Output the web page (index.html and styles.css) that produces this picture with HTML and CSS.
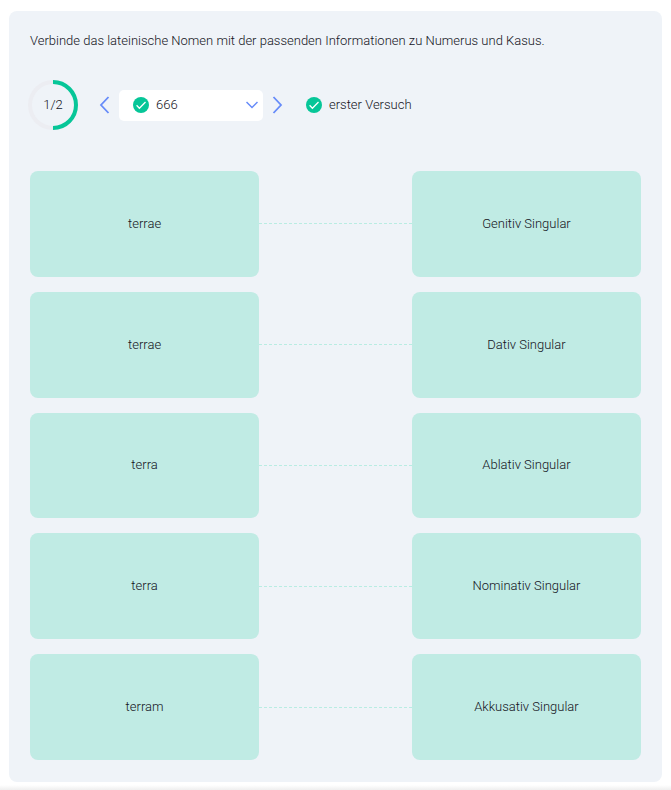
FILE: index.html
```html
<!DOCTYPE html>
<html lang="de">
<head>
<meta charset="utf-8">
<meta name="viewport" content="width=device-width, initial-scale=1">
<title>Nomen verbinden</title>
<link rel="stylesheet" href="styles.css">
</head>
<body>
<main class="panel">
  <p class="task">Verbinde das lateinische Nomen mit der passenden Informationen zu Numerus und Kasus.</p>

  <div class="toolbar">
    <div class="progress">
      <svg class="ring" viewBox="0 0 50 50" aria-hidden="true">
        <circle class="ring-track" cx="25" cy="25" r="23"/>
        <path class="ring-value" d="M25 2a23 23 0 0 1 0 46"/>
      </svg>
      <span class="progress-text">1/2</span>
    </div>

    <div class="pager">
      <button class="step" type="button" aria-label="Zurück">
        <svg class="chevron" viewBox="0 0 11 18" aria-hidden="true"><path d="M9.500 1L2 9L9.500 17"/></svg>
      </button>
      <div class="picker">
        <svg class="check" viewBox="0 0 16 16" aria-hidden="true"><circle cx="8" cy="8" r="8"/><path d="M3.600 8.300L6.400 11.200L12.500 5"/></svg>
        <select class="picker-select" aria-label="Teilnehmer">
          <option>666</option>
        </select>
        <svg class="caret" viewBox="0 0 12 8" aria-hidden="true"><path d="M0.500 1L6 6.500L11.500 1"/></svg>
      </div>
      <button class="step" type="button" aria-label="Weiter">
        <svg class="chevron" viewBox="0 0 11 18" aria-hidden="true"><path d="M1.500 1L9 9L1.500 17"/></svg>
      </button>
    </div>

    <div class="attempt">
      <svg class="check" viewBox="0 0 16 16" aria-hidden="true"><circle cx="8" cy="8" r="8"/><path d="M3.600 8.300L6.400 11.200L12.500 5"/></svg>
      <span>erster Versuch</span>
    </div>
  </div>

  <ul class="pairs">
    <li class="pair"><div class="card">terrae</div><div class="link"></div><div class="card">Genitiv Singular</div></li>
    <li class="pair"><div class="card">terrae</div><div class="link"></div><div class="card">Dativ Singular</div></li>
    <li class="pair"><div class="card">terra</div><div class="link"></div><div class="card">Ablativ Singular</div></li>
    <li class="pair"><div class="card">terra</div><div class="link"></div><div class="card">Nominativ Singular</div></li>
    <li class="pair"><div class="card">terram</div><div class="link"></div><div class="card">Akkusativ Singular</div></li>
  </ul>
</main>
<div class="bottom-shade"></div>
</body>
</html>
```
FILE: styles.css
```css
* {
  box-sizing: border-box;
}

body {
  margin: 0;
  background: #fff;
  color: #14141c;
  font: 350 13px/20px Roboto, "Liberation Sans", sans-serif;
}

.panel {
  margin: 11px 9px 0;
  padding: 20px 21px 22px;
  border-radius: 8px;
  background: #eff3f8;
}

.task {
  margin: 0 0 29px;
}

.toolbar {
  display: flex;
  align-items: center;
  margin: 0 0 41px -2px;
}

.progress {
  display: grid;
  place-items: center;
  width: 50px;
  height: 50px;
}

.ring,
.progress-text {
  grid-area: 1 / 1;
}

.ring {
  width: 50px;
  height: 50px;
  fill: none;
  stroke-width: 4;
}

.ring-track {
  stroke: #ecedf2;
}

.ring-value {
  stroke: #06c698;
}

.pager {
  display: flex;
  align-items: center;
  gap: 9px;
  margin-left: 21px;
}

.step {
  display: flex;
  padding: 0;
  border: 0;
  background: none;
  cursor: pointer;
}

.chevron,
.caret {
  fill: none;
  stroke: #668bf9;
}

.chevron {
  width: 11px;
  height: 18px;
  stroke-width: 1.8;
}

.caret {
  width: 12px;
  height: 8px;
  stroke-width: 1.5;
  pointer-events: none;
}

.picker {
  display: grid;
  grid-template-columns: 16px 1fr 12px;
  align-items: center;
  width: 144px;
  height: 31px;
  padding: 0 5px 0 14px;
  border-radius: 5px;
  background: #fff;
}

.picker-select {
  appearance: none;
  width: 100%;
  height: 31px;
  padding: 0 0 0 7px;
  border: 0;
  background: transparent;
  color: inherit;
  font: inherit;
}

.check {
  flex: none;
  width: 16px;
  height: 16px;
}

.check circle {
  fill: #06c698;
}

.check path {
  fill: none;
  stroke: #fff;
  stroke-width: 1.3;
}

.attempt {
  display: flex;
  align-items: center;
  gap: 7px;
  margin-left: 23px;
}

.pairs {
  display: grid;
  grid-auto-rows: 1fr;
  gap: 15px;
  min-height: 589px;
  margin: 0;
  padding: 0;
  list-style: none;
}

.pair {
  display: grid;
  grid-template-columns: 3fr 2fr 3fr;
  align-items: stretch;
}

.card {
  display: flex;
  align-items: center;
  justify-content: center;
  border-radius: 8px;
  background: #c0ebe4;
  text-align: center;
}

.link {
  align-self: center;
  height: 1px;
  background: repeating-linear-gradient(to right, #b9ece2 0 3px, transparent 3px 5px);
}

.bottom-shade {
  height: 5px;
  margin-top: 3px;
  background: linear-gradient(#fff, #efefef);
}
```
